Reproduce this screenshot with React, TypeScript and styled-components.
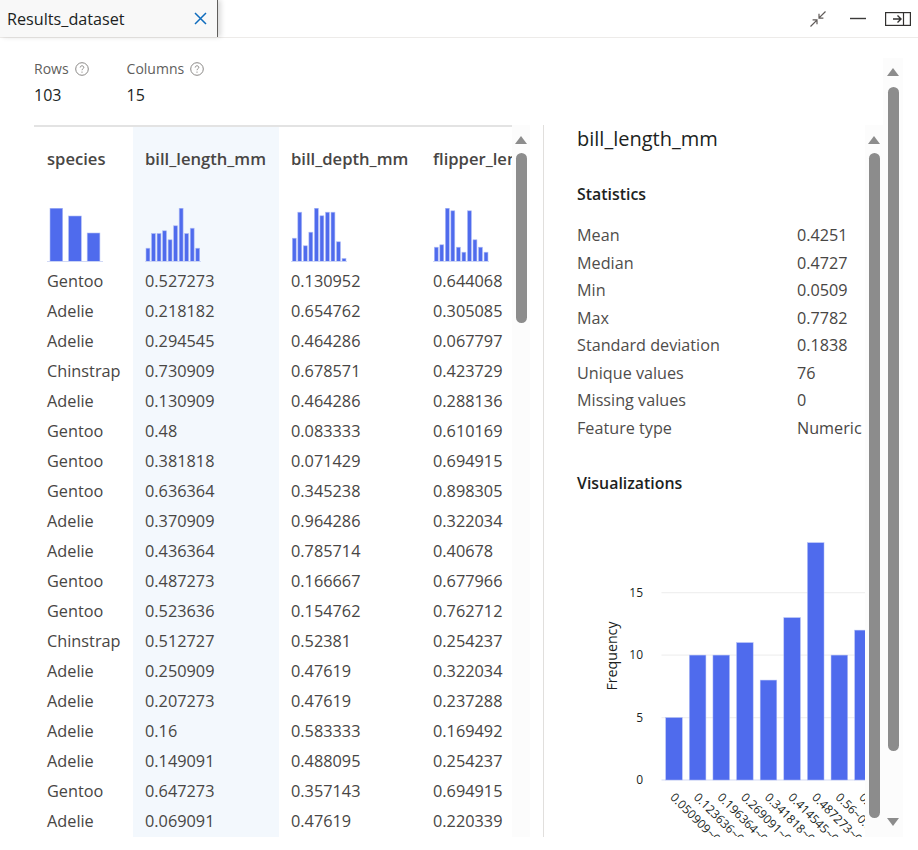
import React from "react";
import styled, { createGlobalStyle } from "styled-components";

const Global = createGlobalStyle`
  html, body { margin: 0; padding: 0; background: #fff; }
  body { font-family: "Open Sans", "Noto Sans", "Liberation Sans", sans-serif; }
`;

const Page = styled.div`
  width: 918px;
  height: 850px;
  display: flex;
  flex-direction: column;
  overflow: hidden;
  background: #fff;
  color: #323130;
`;

const TopBar = styled.header`
  height: 37px;
  flex: none;
  display: flex;
  justify-content: space-between;
  align-items: stretch;
  border-bottom: 1px solid #edebe9;
  box-sizing: content-box;
`;

const Tab = styled.div`
  width: 218px;
  display: flex;
  align-items: center;
  justify-content: space-between;
  box-sizing: border-box;
  padding: 0 10px 0 7px;
  background: #f8f8f8;
  border-right: 1px solid #605e5c;
  box-shadow: 3px 0 5px rgba(0, 0, 0, 0.14);
  font-size: 16.2px;
  color: #201f1e;
`;

const WindowTools = styled.div`
  display: flex;
  align-items: center;
  gap: 19px;
  padding: 0 7px 0 0;
`;

const IconButton = styled.span<{ $after?: number }>`
  display: flex;
  line-height: 0;
  margin-right: ${(p) => p.$after ?? 0}px;
`;

const Body = styled.div`
  flex: 1;
  min-height: 0;
  display: flex;
`;

const Content = styled.main`
  flex: 1;
  min-width: 0;
  padding: 21px 0 13px 34px;
  display: flex;
  flex-direction: column;
`;

const Summary = styled.section`
  height: 66px;
  flex: none;
  display: flex;
  gap: 38px;
`;

const Metric = styled.div`
  display: flex;
  flex-direction: column;
  gap: 6px;
`;

const MetricLabel = styled.div`
  display: flex;
  align-items: center;
  gap: 6px;
  font-size: 14px;
  line-height: 20px;
  color: #605e5c;
`;

const MetricValue = styled.div`
  font-size: 16px;
  line-height: 20px;
  color: #201f1e;
`;

const Panels = styled.div`
  flex: 1;
  min-height: 0;
  display: flex;
`;

const TableArea = styled.div`
  width: 509px;
  flex: none;
  display: flex;
`;

const TableClip = styled.div`
  width: 478px;
  flex: none;
  display: flex;
  overflow: hidden;
  border-top: 2px solid #e3e3e3;
`;

const Column = styled.div<{ $width: number; $inset: number; $active?: boolean }>`
  width: ${(p) => p.$width}px;
  flex: none;
  box-sizing: border-box;
  padding-left: ${(p) => p.$inset}px;
  background: ${(p) => (p.$active ? "#f3f8fd" : "transparent")};
`;

const HeaderCell = styled.div`
  height: 81px;
  padding-top: 20px;
  box-sizing: border-box;
  font-size: 16.6px;
  font-weight: 600;
  line-height: 24px;
  white-space: nowrap;
  color: #484644;
`;

const MiniChart = styled.svg`
  display: block;
  margin-bottom: 4px;
`;

const Cell = styled.div`
  height: 30px;
  font-size: 16.3px;
  line-height: 30px;
  color: #484644;
  white-space: nowrap;
`;

const Scrollbar = styled.div<{ $width: number; $top?: number; $bottom?: number }>`
  width: ${(p) => p.$width}px;
  flex: none;
  display: flex;
  flex-direction: column;
  align-items: center;
  background: #fcfcfc;
  margin: ${(p) => p.$top ?? 0}px 0 ${(p) => p.$bottom ?? 0}px;
`;

const Thumb = styled.div<{ $height: number; $top: number; $width: number }>`
  width: ${(p) => p.$width}px;
  height: ${(p) => p.$height}px;
  margin-top: ${(p) => p.$top}px;
  flex: none;
  border-radius: 6px;
  background: #8c8c8c;
`;

const ArrowUp = styled.div<{ $top: number }>`
  width: 0;
  height: 0;
  margin-top: ${(p) => p.$top}px;
  flex: none;
  border-left: 6.5px solid transparent;
  border-right: 6.5px solid transparent;
  border-bottom: 8px solid #8c8c8c;
`;

const ArrowDown = styled.div<{ $top: number }>`
  width: 0;
  height: 0;
  margin-top: ${(p) => p.$top}px;
  flex: none;
  border-left: 6.5px solid transparent;
  border-right: 6.5px solid transparent;
  border-top: 8px solid #8c8c8c;
`;

const Detail = styled.aside`
  width: 339px;
  flex: none;
  display: flex;
  border-left: 1px solid #e1dfdd;
`;

const DetailBody = styled.div`
  width: 321px;
  flex: none;
  box-sizing: border-box;
  padding: 0 0 0 33px;
  overflow: hidden;
`;

const DetailTitle = styled.h2`
  margin: 0;
  padding-top: 1px;
  height: 56px;
  font-size: 20px;
  font-weight: 400;
  line-height: 26px;
  color: #201f1e;
`;

const SectionTitle = styled.h3`
  margin: 0;
  font-size: 15.9px;
  font-weight: 600;
  line-height: 24px;
  color: #201f1e;
`;

const StatList = styled.dl`
  margin: 16px 0 0;
  display: grid;
  grid-template-columns: 220px 1fr;
  grid-auto-rows: 27.5px;
  font-size: 16.2px;
  line-height: 27.5px;
  white-space: nowrap;
`;

const StatName = styled.dt`
  color: #4f4d4b;
`;

const StatValue = styled.dd`
  margin: 0;
  color: #484644;
`;

const VizTitle = styled(SectionTitle)`
  margin-top: 29px;
`;

const ChartSvg = styled.svg`
  display: block;
  margin-top: 36px;
`;

const ChartText = styled.text`
  font-family: "Open Sans", "Noto Sans", sans-serif;
  font-size: 12px;
  fill: #201f1e;
`;

const AxisTitle = styled(ChartText)`
  font-size: 14.2px;
`;

const species = ["Gentoo","Adelie","Adelie","Chinstrap","Adelie","Gentoo","Gentoo","Gentoo","Adelie","Adelie","Gentoo","Gentoo","Chinstrap","Adelie","Adelie","Adelie","Adelie","Gentoo","Adelie"];
const billLength = ["0.527273","0.218182","0.294545","0.730909","0.130909","0.48","0.381818","0.636364","0.370909","0.436364","0.487273","0.523636","0.512727","0.250909","0.207273","0.16","0.149091","0.647273","0.069091"];
const billDepth = ["0.130952","0.654762","0.464286","0.678571","0.464286","0.083333","0.071429","0.345238","0.964286","0.785714","0.166667","0.154762","0.52381","0.47619","0.47619","0.583333","0.488095","0.357143","0.47619"];
const flipper = ["0.644068","0.305085","0.067797","0.423729","0.288136","0.610169","0.694915","0.898305","0.322034","0.40678","0.677966","0.762712","0.254237","0.322034","0.237288","0.169492","0.254237","0.694915","0.220339"];

type HistProps = { heights: number[]; barWidth: number; step: number; start: number };

const MiniHistogram = ({ heights, barWidth, step, start }: HistProps) => (
  <MiniChart width={56} height={54} viewBox="0 0 56 54">
    {heights.map((h, i) => (
      <rect key={i} x={start + i * step} y={53.5 - h} width={barWidth} height={h} fill="#4f6bed" stroke="#afbcf6" strokeWidth="0.6" />
    ))}
    <line x1="0" x2="56" y1="53.6" y2="53.6" stroke="#cdd5f6" strokeWidth="1" />
  </MiniChart>
);

const columns = [
  { name: "species", width: 99, inset: 13, values: species, heights: [53.3, 45.5, 28.5], barWidth: 12.7, step: 18.6, start: 3 },
  { name: "bill_length_mm", width: 146, inset: 12, active: true, values: billLength, heights: [13.3, 28, 28, 30.7, 21.7, 35.7, 53.3, 28, 33.3, 13.3], barWidth: 3.9, step: 5.53, start: 1 },
  { name: "bill_depth_mm", width: 142, inset: 12, values: billDepth, heights: [23.3, 49.3, 15.7, 29.3, 53.3, 45.7, 49.3, 49.3, 19.7, 3], barWidth: 3.9, step: 5.53, start: 1.3 },
  { name: "flipper_length_mm", width: 91, inset: 12, values: flipper, heights: [14.3, 16.7, 53.3, 50.7, 14.3, 9.3, 50.7, 21.7, 14.3, 9.3], barWidth: 3.9, step: 5.53, start: 1.3 },
];

const stats: [string, string][] = [
  ["Mean", "0.4251"],
  ["Median", "0.4727"],
  ["Min", "0.0509"],
  ["Max", "0.7782"],
  ["Standard deviation", "0.1838"],
  ["Unique values", "76"],
  ["Missing values", "0"],
  ["Feature type", "Numeric"],
];

const freq = [5, 10, 10, 11, 8, 13, 19, 10, 12];
const labels = ["0.050909~0.123636","0.123636~0.196364","0.196364~0.269091","0.269091~0.341818","0.341818~0.414545","0.414545~0.487273","0.487273~0.56","0.56~0.632727","0.632727~0.705455"];

const HelpIcon = () => (
  <svg width="14" height="14" viewBox="0 0 14 14" fill="none">
    <circle cx="7" cy="7" r="6.3" stroke="#8a8886" strokeWidth="1" />
    <path d="M5.2 5.5c0-1 .8-1.7 1.8-1.7s1.8.7 1.8 1.6c0 1.3-1.8 1.4-1.8 2.8" stroke="#8a8886" strokeWidth="1" />
    <circle cx="7" cy="10.1" r="0.7" fill="#8a8886" />
  </svg>
);

const CloseIcon = () => (
  <svg width="13" height="13" viewBox="0 0 13 13" fill="none">
    <path d="M1 1l11 11M12 1L1 12" stroke="#0f6cbd" strokeWidth="1.5" />
  </svg>
);

const CollapseIcon = () => (
  <svg width="16" height="16" viewBox="0 0 16 16" fill="none">
    <path d="M15.5.5L8.8 7.2M9 2.8v4.4h4.4" stroke="#5f5a58" strokeWidth="1.2" />
    <path d="M.5 15.5l6.7-6.7M7 13.2V8.8H2.6" stroke="#5f5a58" strokeWidth="1.2" />
  </svg>
);

const MinimizeIcon = () => (
  <svg width="16" height="3" viewBox="0 0 16 3" fill="none">
    <path d="M0 1.5h16" stroke="#3b3a39" strokeWidth="1.4" />
  </svg>
);

const PanelIcon = () => (
  <svg width="26" height="14" viewBox="0 0 26 14" fill="none">
    <rect x="0.6" y="0.6" width="24.8" height="12.8" stroke="#323130" strokeWidth="1.2" />
    <path d="M18.5 1v12" stroke="#323130" strokeWidth="1.2" />
    <path d="M8 7h8M12.5 3.5L16 7l-3.5 3.5" stroke="#323130" strokeWidth="1.4" />
  </svg>
);

const Histogram = () => {
  const base = 249;
  const unit = 12.49;
  return (
    <ChartSvg width={288} height={307} viewBox="0 0 288 307">
      {[0, 5, 10, 15].map((t) => (
        <g key={t}>
          <line x1="84.5" x2="288" y1={base - t * unit} y2={base - t * unit} stroke={t === 0 ? "#d6dbf3" : "#f0f0f0"} strokeWidth="1.2" />
          <ChartText x="66" y={base - t * unit + 4} textAnchor="end">{t}</ChartText>
        </g>
      ))}
      <AxisTitle transform={`translate(40 ${base - 124}) rotate(-90)`} textAnchor="middle">Frequency</AxisTitle>
      {freq.map((f, i) => (
        <rect key={i} x={88.7 + i * 23.62} y={base - f * unit} width={16.6} height={f * unit} fill="#4f6bed" stroke="#b3bff6" strokeWidth="0.5" />
      ))}
      {labels.map((l, i) => (
        <ChartText key={l} transform={`translate(${92.5 + i * 23.62} ${base + 18}) rotate(45)`}>{l}</ChartText>
      ))}
    </ChartSvg>
  );
};

const Gutter = styled.div`
  width: 15px;
  flex: none;
`;

export default function App() {
  return (
    <Page>
      <Global />
      <TopBar>
        <Tab>
          <span>Results_dataset</span>
          <IconButton><CloseIcon /></IconButton>
        </Tab>
        <WindowTools>
          <IconButton $after={5}><CollapseIcon /></IconButton>
          <IconButton><MinimizeIcon /></IconButton>
          <IconButton><PanelIcon /></IconButton>
        </WindowTools>
      </TopBar>
      <Body>
        <Content>
          <Summary>
            <Metric>
              <MetricLabel>Rows <HelpIcon /></MetricLabel>
              <MetricValue>103</MetricValue>
            </Metric>
            <Metric>
              <MetricLabel>Columns <HelpIcon /></MetricLabel>
              <MetricValue>15</MetricValue>
            </Metric>
          </Summary>
          <Panels>
            <TableArea>
              <TableClip>
                {columns.map((c) => (
                  <Column key={c.name} $width={c.width} $inset={c.inset} $active={c.active}>
                    <HeaderCell>{c.name}</HeaderCell>
                    <MiniHistogram heights={c.heights} barWidth={c.barWidth} step={c.step} start={c.start} />
                    {c.values.map((v, i) => (
                      <Cell key={i}>{v}</Cell>
                    ))}
                  </Column>
                ))}
              </TableClip>
              <Scrollbar $width={18}>
                <ArrowUp $top={11} />
                <Thumb $width={11} $height={170} $top={9} />
              </Scrollbar>
            </TableArea>
            <Detail>
              <DetailBody>
                <DetailTitle>bill_length_mm</DetailTitle>
                <SectionTitle>Statistics</SectionTitle>
                <StatList>
                  {stats.map(([k, v]) => (
                    <React.Fragment key={k}>
                      <StatName>{k}</StatName>
                      <StatValue>{v}</StatValue>
                    </React.Fragment>
                  ))}
                </StatList>
                <VizTitle>Visualizations</VizTitle>
                <Histogram />
              </DetailBody>
              <Scrollbar $width={18}>
                <ArrowUp $top={11} />
                <Thumb $width={11} $height={665} $top={9} />
              </Scrollbar>
            </Detail>
          </Panels>
        </Content>
        <Scrollbar $width={20} $top={20} $bottom={13}>
          <ArrowUp $top={10} />
          <Thumb $width={11} $height={664} $top={11} />
          <ArrowDown $top={67} />
        </Scrollbar>
        <Gutter />
      </Body>
    </Page>
  );
}
